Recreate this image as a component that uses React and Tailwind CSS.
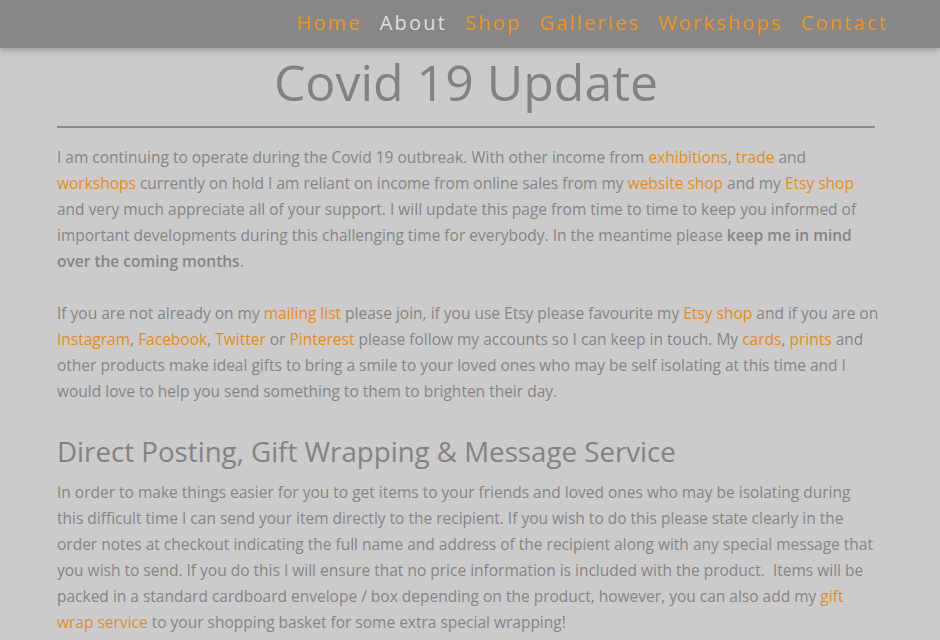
import React from "react";

const navItems = [
  { label: "Home", active: false },
  { label: "About", active: true },
  { label: "Shop", active: false },
  { label: "Galleries", active: false },
  { label: "Workshops", active: false },
  { label: "Contact", active: false },
];

function A({ children }) {
  return <a className="text-[#e38d1c]">{children}</a>;
}

function Line({ children }) {
  return <span className="block whitespace-nowrap">{children}</span>;
}

export default function App() {
  return (
    <div
      className="min-h-[640px] w-[940px] overflow-hidden bg-[#cbcbcb] text-[#858585]"
      style={{ fontFamily: '"Open Sans", "Liberation Sans", sans-serif' }}
    >
      <header className="relative z-10 flex h-[48px] items-center justify-end bg-[#878787] pr-[52px] shadow-[0_2px_6px_rgba(0,0,0,0.25)]">
        <nav className="flex gap-[18px] pb-[2px] text-[20px] tracking-[2.2px]">
          {navItems.map((item) => (
            <a
              key={item.label}
              className={item.active ? "text-[#dedede]" : "text-[#ee9419]"}
            >
              {item.label}
            </a>
          ))}
        </nav>
      </header>

      <main className="ml-[57px] w-[818px]">
        <h1 className="pt-[2px] text-center text-[50px] leading-[64px] text-[#828282]">
          Covid 19 Update
        </h1>
        <hr className="mx-0 mt-[12px] w-[818px] border-t-2 border-[#8b8b8b]" />

        <div className="mt-[16px] text-[15.5px] leading-[26px]">
          <p>
            <Line>
              I am continuing to operate during the Covid 19 outbreak. With other income from{" "}
              <A>exhibitions</A>, <A>trade</A> and
            </Line>
            <Line>
              <A>workshops</A> currently on hold I am reliant on income from online sales from my{" "}
              <A>website shop</A> and my <A>Etsy shop</A>
            </Line>
            <Line>
              and very much appreciate all of your support. I will update this page from time to
              time to keep you informed of
            </Line>
            <Line>
              important developments during this challenging time for everybody. In the meantime
              please <b className="font-semibold">keep me in mind</b>
            </Line>
            <Line>
              <b className="font-semibold">over the coming months</b>.
            </Line>
          </p>

          <p className="mt-[26px]">
            <Line>
              If you are not already on my <A>mailing list</A> please join, if you use Etsy please
              favourite my <A>Etsy shop</A> and if you are on
            </Line>
            <Line>
              <A>Instagram</A>, <A>Facebook</A>, <A>Twitter</A> or <A>Pinterest</A> please follow my
              accounts so I can keep in touch. My <A>cards</A>, <A>prints</A> and
            </Line>
            <Line>
              other products make ideal gifts to bring a smile to your loved ones who may be self
              isolating at this time and I
            </Line>
            <Line>would love to help you send something to them to brighten their day.</Line>
          </p>

          <h2 className="mt-[27px] text-[27.7px] leading-[40px] text-[#838383]">
            Direct Posting, Gift Wrapping &amp; Message Service
          </h2>

          <p className="mt-[8px]">
            <Line>
              In order to make things easier for you to get items to your friends and loved ones who
              may be isolating during
            </Line>
            <Line>
              this difficult time I can send your item directly to the recipient. If you wish to do
              this please state clearly in the
            </Line>
            <Line>
              order notes at checkout indicating the full name and address of the recipient along
              with any special message that
            </Line>
            <Line>
              you wish to send. If you do this I will ensure that no price information is included
              with the product.&nbsp; Items will be
            </Line>
            <Line>
              packed in a standard cardboard envelope / box depending on the product, however, you
              can also add my <A>gift</A>
            </Line>
            <Line>
              <A>wrap service</A> to your shopping basket for some extra special wrapping!
            </Line>
          </p>
        </div>
      </main>
    </div>
  );
}
